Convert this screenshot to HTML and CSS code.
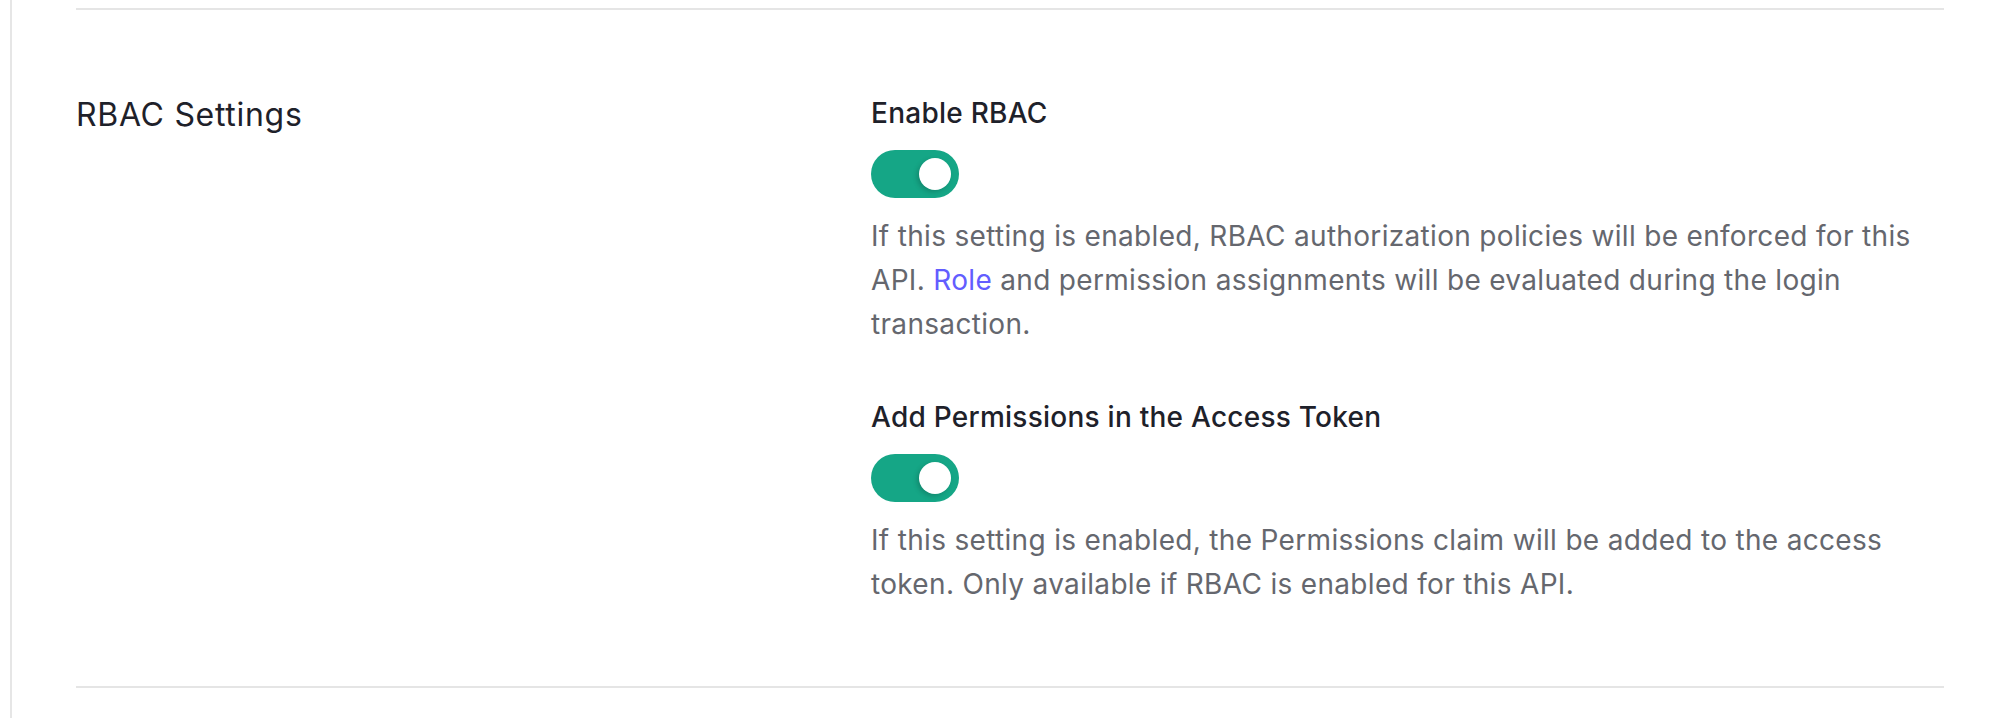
FILE: index.html
```html
<!DOCTYPE html>
<html lang="en">
<head>
<meta charset="utf-8">
<title>RBAC Settings</title>
<link rel="stylesheet" href="styles.css">
</head>
<body>
<div class="page">
  <section class="settings-section">
    <h2 class="section-title">RBAC Settings</h2>
    <div class="section-fields">
      <div class="field">
        <div class="field-label">Enable RBAC</div>
        <button class="toggle is-on" type="button" aria-pressed="true"><span class="toggle-knob"></span></button>
        <p class="field-help">If this setting is enabled, RBAC authorization policies will be enforced for this API. <a href="#" class="help-link">Role</a> and permission assignments will be evaluated during the login transaction.</p>
      </div>
      <div class="field">
        <div class="field-label">Add Permissions in the Access Token</div>
        <button class="toggle is-on" type="button" aria-pressed="true"><span class="toggle-knob"></span></button>
        <p class="field-help">If this setting is enabled, the Permissions claim will be added to the access token. Only available if RBAC is enabled for this API.</p>
      </div>
    </div>
  </section>
</div>
</body>
</html>
```

FILE: styles.css
```css
* { box-sizing: border-box; }

html, body {
  margin: 0;
  padding: 0;
  background: #ffffff;
}

body {
  font-family: Inter, "Noto Sans", "Liberation Sans", sans-serif;
  color: #1e212a;
}

.page {
  min-height: 100vh;
  margin-left: 10px;
  border-left: 2px solid #e6e6e6;
  padding: 8px 54px 0 64px;
}

.settings-section {
  display: grid;
  grid-template-columns: 795px 1fr;
  border-top: 2px solid #e5e5e5;
  border-bottom: 2px solid #e5e5e5;
  padding: 82px 0 80px;
}

.section-title {
  margin: 0;
  font-size: 32px;
  line-height: 46px;
  font-weight: 400;
  letter-spacing: 0.7px;
  color: #1e212a;
}

.section-fields {
  display: flex;
  flex-direction: column;
  gap: 50px;
}

.field {
  display: flex;
  flex-direction: column;
  align-items: flex-start;
}

.field-label {
  font-size: 28px;
  line-height: 42px;
  font-weight: 500;
  letter-spacing: 0.25px;
  color: #1e212a;
  margin-bottom: 16px;
}

.toggle {
  display: flex;
  justify-content: flex-end;
  align-items: center;
  width: 88px;
  height: 48px;
  padding: 0 8px;
  border: 0;
  border-radius: 24px;
  background: #15a686;
  cursor: pointer;
}

.toggle-knob {
  width: 32px;
  height: 32px;
  border-radius: 50%;
  background: #ffffff;
  box-shadow: -2px 2px 5px rgba(0, 0, 0, 0.18);
}

.field-help {
  margin: 16px 0 0;
  font-size: 28px;
  line-height: 44px;
  letter-spacing: 0.32px;
  color: #65676e;
}

.help-link {
  color: #635dff;
  text-decoration: none;
}
```
